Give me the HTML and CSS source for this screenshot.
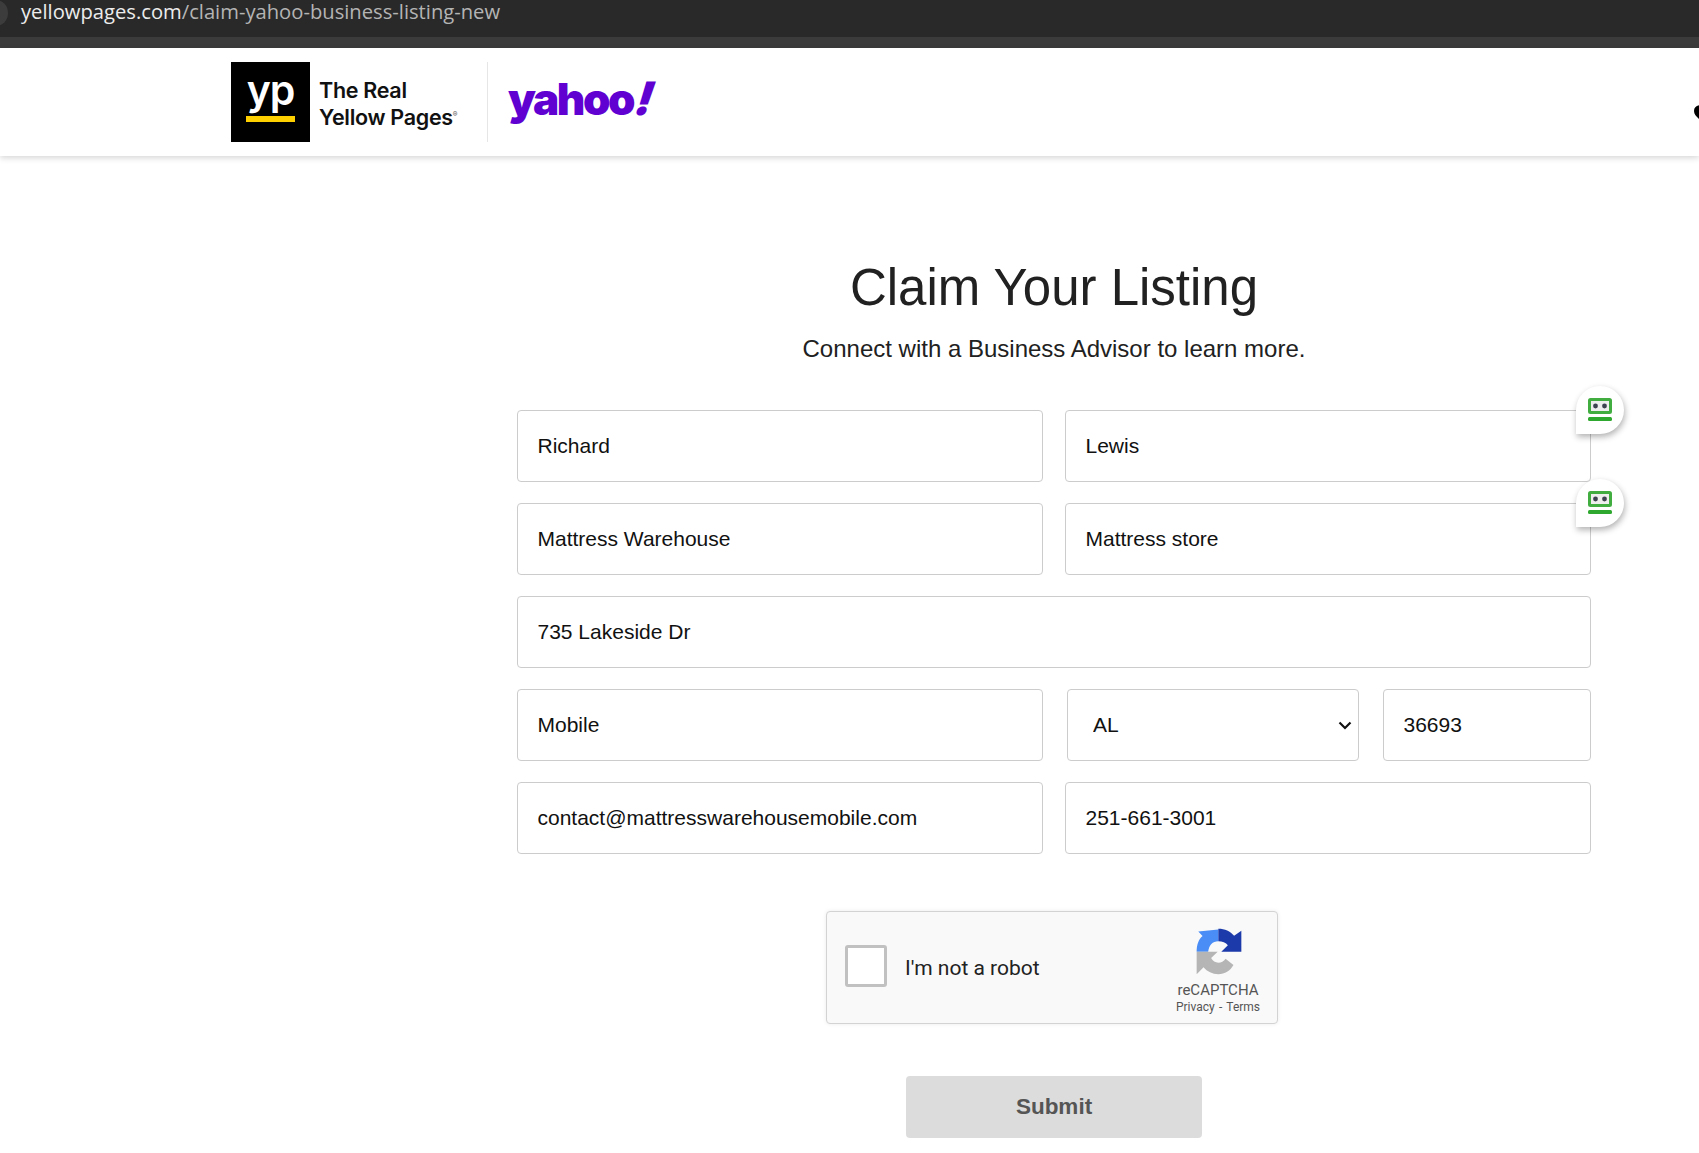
FILE: index.html
```html
<!DOCTYPE html>
<html lang="en">
<head>
<meta charset="utf-8">
<title>Claim Your Listing</title>
<link rel="stylesheet" href="styles.css">
</head>
<body>
<div class="browser-bar">
  <div class="url-row">
    <span class="site-dot"></span>
    <span class="url"><span class="url-host">yellowpages.com</span>/claim-yahoo-business-listing-new</span>
  </div>
  <div class="bookmark-row"></div>
</div>
<header class="site-header">
  <div class="yp-box">
    <span class="yp-mark">yp</span>
    <span class="yp-bar"></span>
  </div>
  <div class="yp-name">The Real<br>Yellow Pages<sup class="reg">®</sup></div>
  <div class="logo-divider"></div>
  <div class="yahoo">yahoo<span class="yahoo-bang">!</span></div>
  <svg class="menu-blob" width="8" height="17" viewBox="0 0 8 17"><path d="M8 0C3 0 0 2 0 6c0 4 4 7 8 11z" fill="#000"/></svg>
</header>
<main class="claim">
  <h1 class="claim-title">Claim Your Listing</h1>
  <p class="claim-sub">Connect with a Business Advisor to learn more.</p>
  <form class="fields">
    <div class="row row-2">
      <input class="field" value="Richard">
      <div class="field-wrap">
        <input class="field" value="Lewis">
        <span class="bubble">
          <svg width="24" height="24" viewBox="0 0 24 24"><rect x="1.5" y="1.5" width="21" height="13" rx="1" fill="#eee" stroke="#41ad41" stroke-width="3"/><circle cx="7.5" cy="8" r="2.4" fill="#3d4250"/><circle cx="16.5" cy="8" r="2.4" fill="#3d4250"/><rect x="0" y="19" width="24" height="4" rx="1.5" fill="#2ea82e"/></svg>
        </span>
      </div>
    </div>
    <div class="row row-2">
      <input class="field" value="Mattress Warehouse">
      <div class="field-wrap">
        <input class="field" value="Mattress store">
        <span class="bubble">
          <svg width="24" height="24" viewBox="0 0 24 24"><rect x="1.5" y="1.5" width="21" height="13" rx="1" fill="#eee" stroke="#41ad41" stroke-width="3"/><circle cx="7.5" cy="8" r="2.4" fill="#3d4250"/><circle cx="16.5" cy="8" r="2.4" fill="#3d4250"/><rect x="0" y="19" width="24" height="4" rx="1.5" fill="#2ea82e"/></svg>
        </span>
      </div>
    </div>
    <div class="row">
      <input class="field" value="735 Lakeside Dr">
    </div>
    <div class="row row-addr">
      <input class="field" value="Mobile">
      <div class="field-wrap">
        <select class="field field-select"><option>AL</option></select>
        <svg class="chevron" width="14" height="9" viewBox="0 0 14 9"><path d="M1.5 1.5 L7 7 L12.5 1.5" fill="none" stroke="#111" stroke-width="2.2"/></svg>
      </div>
      <input class="field" value="36693">
    </div>
    <div class="row row-2">
      <input class="field" value="contact@mattresswarehousemobile.com">
      <input class="field" value="251-661-3001">
    </div>
    <div class="captcha">
      <span class="captcha-check"></span>
      <span class="captcha-label">I'm not a robot</span>
      <div class="captcha-brand">
        <svg class="captcha-logo" width="46" height="47" viewBox="20 20 140 142">
          <path d="M22 92 C22 70 28 54 40 44 L27 30 L88 24 L88 60 C70 60 60 72 57 92 Z" fill="#4a8df6"/>
          <path d="M88 22 C108 22 124 30 136 43 L158 28 L158 92 L97 92 L117 72 C111 65 100 60 88 60 Z" fill="#1c3aa9"/>
          <path d="M22 92 L86 92 L66 111 C71 120 79 125 88 125 C97 125 104 121 110 113 L134 132 C124 150 108 160 88 160 C70 160 54 152 43 139 L22 160 Z" fill="#b5b5b5"/>
        </svg>
        <span class="captcha-name">reCAPTCHA</span>
        <span class="captcha-links">Privacy - Terms</span>
      </div>
    </div>
    <button type="button" class="submit">Submit</button>
  </form>
</main>
</body>
</html>
```
FILE: styles.css
```css
* { box-sizing: border-box; }
html, body { margin: 0; padding: 0; background: #fff; }
body { height: 1153px; overflow: hidden; font-family: "Liberation Sans", Arial, sans-serif; color: #212121; }

.browser-bar { height: 48px; background: #3b3b3b; }
.url-row { height: 37px; background: #292929; display: flex; align-items: flex-start; gap: 13px; }
.site-dot { width: 24px; height: 26px; border-radius: 50%; background: #3c3c3c; margin-left: -16px; flex: none; }
.url { font-family: "Open Sans", sans-serif; font-size: 20.2px; line-height: 22px; color: #b4b4b4; white-space: nowrap; }
.url-host { color: #ececec; }

.site-header { height: 108px; padding: 14px 0 14px 231px; display: flex; align-items: center; background: #fff; box-shadow: 0 2px 6px rgba(0,0,0,.16); position: relative; overflow: hidden; }
.yp-box { width: 79px; height: 80px; background: #000; display: flex; flex-direction: column; align-items: center; padding-top: 8px; flex: none; }
.yp-mark { font-family: Inter, sans-serif; font-weight: 600; font-size: 41px; line-height: 40px; letter-spacing: -1px; color: #fff; }
.yp-bar { width: 49px; height: 6px; background: #ffd000; margin-top: 6px; }
.yp-name { font-family: Inter, sans-serif; font-weight: 600; font-size: 21.5px; line-height: 27px; letter-spacing: -.3px; color: #111; margin: 4px 0 0 9px; width: 168px; flex: none; }
.reg { font-size: 7px; line-height: 0; vertical-align: super; color: #666; }
.logo-divider { width: 1px; height: 80px; background: #e6e6e6; flex: none; }
.yahoo { font-family: Inter, sans-serif; font-weight: 900; font-size: 44px; line-height: 40px; letter-spacing: -2.4px; color: #6001d2; margin: 0 0 8px 20px; }
.yahoo-bang { display: inline-block; transform: skewX(-18deg); font-size: 46px; margin-left: 4px; }
.menu-blob { position: absolute; right: -3px; top: 57px; }

.claim { padding-left: 517px; width: 1591px; }
.claim-title { margin: 0; padding-top: 102px; font-weight: 400; font-size: 51px; line-height: 60px; text-align: center; color: #212121; }
.claim-sub { margin: 0; padding-top: 17px; font-size: 24px; line-height: 28px; text-align: center; color: #212121; }
.fields { margin-top: 47px; display: flex; flex-direction: column; gap: 21px; align-items: stretch; }
.row { display: flex; }
.row > .field { flex: 1; }
.row-2 { display: grid; grid-template-columns: 1fr 1fr; column-gap: 22px; }
.row-addr { display: grid; grid-template-columns: 526px 292px 208px; column-gap: 24px; }
.field-wrap { position: relative; }
.field { display: block; width: 100%; height: 72px; border: 1px solid #ccc; border-radius: 4px; background: #fff; padding: 0 19.5px; font-family: "Liberation Sans", Arial, sans-serif; font-size: 21px; color: #111; outline: none; }
.field-select { appearance: none; -webkit-appearance: none; padding: 0 0 2px 25px; }
.chevron { position: absolute; left: 271px; top: 32px; pointer-events: none; }
.bubble { position: absolute; left: 511px; top: -24px; width: 48px; height: 48px; background: #fff; border-radius: 50% 50% 50% 0; box-shadow: 1px 3px 6px rgba(0,0,0,.3); display: flex; align-items: center; justify-content: center; }

.captcha { align-self: flex-start; margin: 36px 0 0 309px; width: 452px; height: 113px; background: #f9f9f9; border: 1px solid #d3d3d3; border-radius: 4px; box-shadow: 0 0 4px rgba(0,0,0,.08); display: flex; align-items: center; position: relative; }
.captcha-check { width: 42px; height: 42px; margin: 0 0 3px 18px; background: #fff; border: 3px solid #c1c1c1; border-radius: 3px; flex: none; }
.captcha-label { font-family: Roboto, sans-serif; font-size: 21px; color: #222; margin-left: 18px; }
.captcha-brand { position: absolute; right: 15px; top: 16px; width: 88px; display: flex; flex-direction: column; align-items: center; }
.captcha-logo { display: block; margin-left: 2px; }
.captcha-name { font-family: Roboto, sans-serif; font-size: 15px; line-height: 18px; color: #555; margin-top: 6px; white-space: nowrap; }
.captcha-links { font-family: Roboto, sans-serif; font-size: 12px; line-height: 17px; word-spacing: 1.3px; color: #555; white-space: nowrap; }

.submit { align-self: flex-start; margin: 31px 0 0 389px; width: 296px; height: 62px; background: #dcdcdc; border: 0; border-radius: 4px; font-family: "Liberation Sans", Arial, sans-serif; font-size: 22.5px; font-weight: 700; color: #555; }
```
